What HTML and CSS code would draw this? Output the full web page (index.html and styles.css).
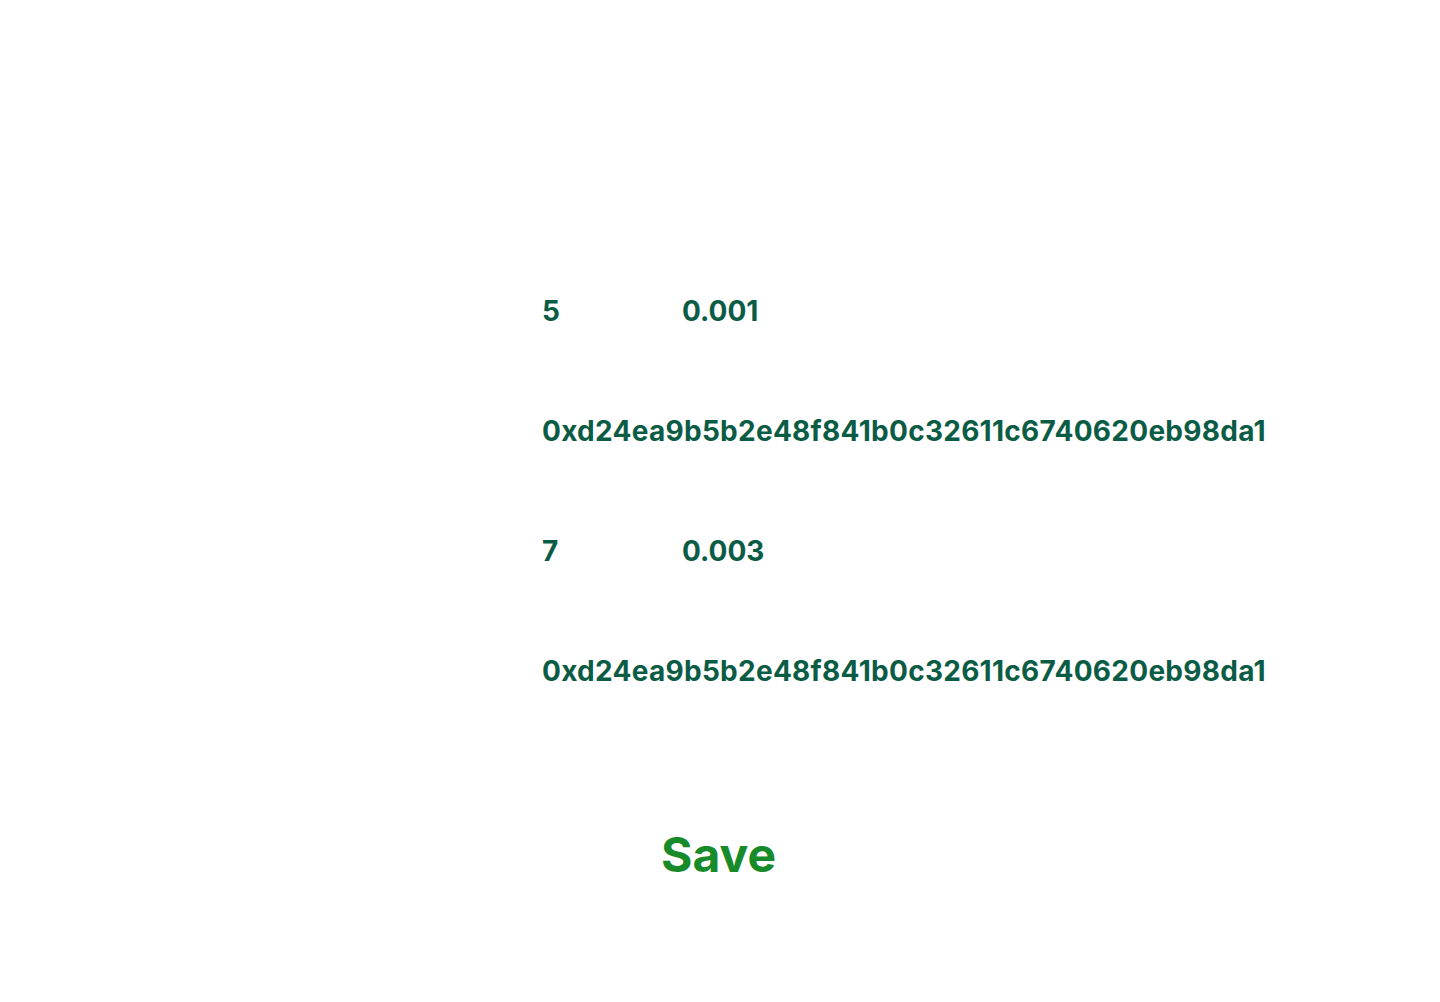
FILE: index.html
```html
<!DOCTYPE html>
<html>
<head>
<meta charset="utf-8">
<link rel="stylesheet" href="styles.css">
</head>
<body>
<main class="page">
  <section class="list">
    <div class="row pair"><span class="num">5</span><span class="val">0.001</span></div>
    <div class="row addr">0xd24ea9b5b2e48f841b0c32611c6740620eb98da1</div>
    <div class="row pair"><span class="num">7</span><span class="val">0.003</span></div>
    <div class="row addr">0xd24ea9b5b2e48f841b0c32611c6740620eb98da1</div>
  </section>
  <div class="actions"><button class="save">Save</button></div>
</main>
</body>
</html>
```
FILE: styles.css
```css
html, body { margin: 0; padding: 0; background: #fff; }
body { font-family: Inter, "Noto Sans", sans-serif; }
.page { width: 1440px; height: 1002px; padding-top: 294px; box-sizing: border-box; padding-left: 542px; }
.list { display: flex; flex-direction: column; gap: 86px; }
.row { height: 34px; line-height: 34px; font-size: 28px; font-weight: 700; color: #0b5c45; }
.addr { letter-spacing: 0.28px; }
.pair { display: grid; grid-template-columns: 140px auto; }
.actions { margin-top: 139px; padding-left: 119px; }
.save { border: none; background: none; padding: 0; font-family: Inter, sans-serif; font-size: 48px; font-weight: 700; color: #178a2a; line-height: 56px; }
```
